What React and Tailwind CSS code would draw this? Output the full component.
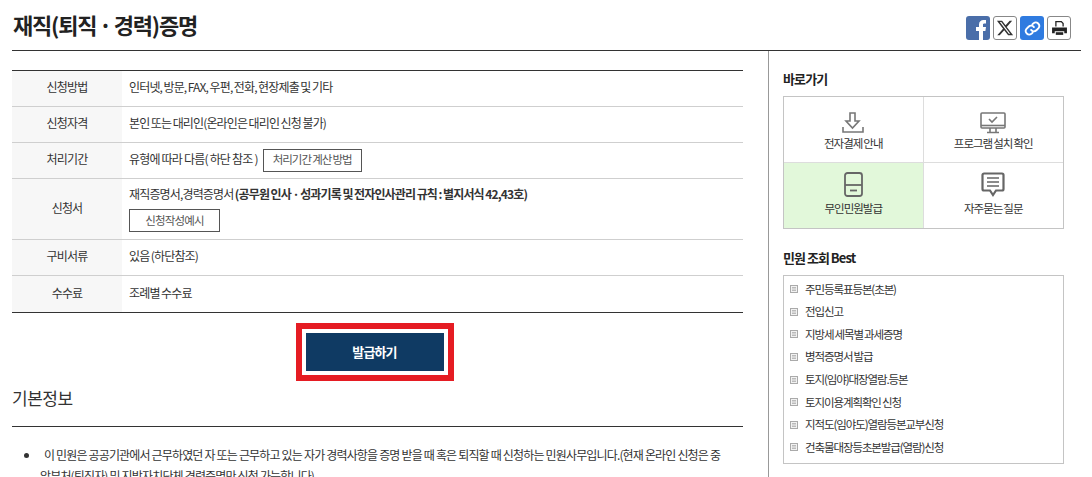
import React from "react";

const Row = ({ label, h, pb = "pb-[3px]", children }) => (
  <div className={`flex border-b border-[#cfcfcf] ${h}`}>
    <div className="w-[110px] shrink-0 bg-[#f7f7f7] flex items-center justify-center pb-[3px] text-[#333]">{label}</div>
    <div className={`flex-1 pl-[7px] flex flex-col justify-center ${pb}`}>{children}</div>
  </div>
);

const LinkBox = ({ bg, top, gap, icon, label }) => (
  <div className={`flex flex-col items-center h-full ${top} ${bg}`}>
    <div className="h-[24px] flex items-center justify-center">{icon}</div>
    <div className={`${gap} text-[11.5px] leading-[18px] tracking-[-1px] [word-spacing:-0.5px] text-[#333]`}>{label}</div>
  </div>
);

const bestList = [
  "주민등록표등본(초본)",
  "전입신고",
  "지방세 세목별 과세증명",
  "병적증명서 발급",
  "토지(임야)대장열람.등본",
  "토지이용계획확인 신청",
  "지적도(임야도)열람등본교부신청",
  "건축물대장등초본발급(열람)신청",
];

const App = () => {
  return (
    <div className="h-[477px] w-[1092px] overflow-hidden bg-white font-['Noto_Sans_CJK_KR','Noto_Sans',sans-serif] text-[12px] tracking-[-0.85px] [word-spacing:-0.4px] text-[#333]">
      <div className="ml-3 mr-[11px] h-[51px] border-b border-[#333] flex justify-between">
        <h1 className="pl-px pt-[6px] text-[22px] leading-[36px] font-bold tracking-[-1.2px] [word-spacing:-1px] text-[#222]">재직(퇴직 · 경력)증명</h1>
        <div className="flex gap-[3px] pt-4 pr-[10px]">
          <div className="w-6 h-6 rounded-[3px] bg-[#4a6ea9] overflow-hidden flex justify-center items-end">
            <svg width="24" height="24" viewBox="0 0 24 24"><path d="M13 24v-9h-3v-4h3V8.500C13 5.500 15 4 17.500 4H20v3.500h-1.800C17 7.500 17 8.300 17 9v2h3l-.6 4H17v9z" fill="#fff"/></svg>
          </div>
          <div className="w-6 h-6 rounded-[3px] border border-[#888] flex items-center justify-center">
            <svg width="18" height="18" viewBox="0 0 24 24" fill="#333"><path d="M18.240 2.250h3.310l-7.230 8.260 8.500 11.240H16.170l-5.210-6.820L4.990 21.750H1.680l7.730-8.840L1.250 2.250H8.080l4.710 6.230zM17.080 19.770h1.830L7.080 4.130H5.120z"/></svg>
          </div>
          <div className="w-6 h-6 rounded-[3px] bg-[#2f7be0] flex items-center justify-center">
            <svg width="17" height="17" viewBox="0 0 24 24" fill="none" stroke="#fff" strokeWidth="2.600" strokeLinecap="round"><path d="M10 14a5 5 0 0 0 7.500.5l3-3a5 5 0 0 0-7-7l-1.700 1.700"/><path d="M14 10a5 5 0 0 0-7.500-.5l-3 3a5 5 0 0 0 7 7l1.700-1.700"/></svg>
          </div>
          <div className="w-6 h-6 rounded-[3px] border border-[#888] flex items-center justify-center">
            <svg width="17" height="17" viewBox="0 0 16 16" fill="#222"><path d="M4 1h6l2 2v3h-1.200V3.600L9.500 2.200H5.200V6H4z"/><path d="M1 7h14v5.500h-2.500V10.500h-9v2H1z"/><path d="M4.500 11.500h7V14h-7z"/></svg>
          </div>
        </div>
      </div>

      <div className="flex pl-3">
        <div className="w-[731px] shrink-0 pt-[19px]">
          <div className="border-t border-b border-t-[#333] border-b-[#333]">
            <Row label="신청방법" h="h-9">
              <p>인터넷, 방문, FAX, 우편, 전화, 현장제출 및 기타</p>
            </Row>
            <Row label="신청자격" h="h-9">
              <p>본인 또는 대리인(온라인은 대리인 신청 불가)</p>
            </Row>
            <Row label="처리기간" h="h-9" pb="pb-px">
              <div className="flex items-center">
                <span className="mb-[2px] [word-spacing:0.2px]">유형에 따라 다름( 하단 참조 )</span>
                <span className="ml-[5px] w-[99px] h-[23px] border border-[#555] flex items-center justify-center text-[11.5px] tracking-[-1px] text-[#555]">처리기간 계산 방법</span>
              </div>
            </Row>
            <Row label="신청서" h="h-[61px]" pb="pb-px">
              <p>재직증명서,경력증명서 <b className="font-bold">(공무원 인사 · 성과기록 및 전자인사관리 규칙 : 별지서식 42,43호)</b></p>
              <span className="mt-[6px] w-[91px] h-[23px] border border-[#555] flex items-center justify-center text-[11.5px] text-[#555]">신청작성예시</span>
            </Row>
            <Row label="구비서류" h="h-9">
              <p>있음 (하단참조)</p>
            </Row>
            <div className="flex h-9">
              <div className="w-[110px] shrink-0 bg-[#f7f7f7] flex items-center justify-center pb-[3px]">수수료</div>
              <div className="flex-1 pl-[7px] pb-[3px] flex items-center">조례별 수수료</div>
            </div>
          </div>

          <div className="flex justify-center mt-[10px] pr-[6px]">
            <div className="w-[158px] h-[58px] border-[6px] border-[#e51c23] p-1">
              <div className="h-full bg-[#0f3a63] flex items-center justify-center text-white text-[13px] font-bold">발급하기</div>
            </div>
          </div>

          <h2 className="mt-[4px] h-[41px] text-[17px] leading-[26px] tracking-[-0.5px] font-normal text-[#333]">기본정보</h2>
          <div className="border-t border-[#333] pt-[17px]">
            <ul className="list-disc pl-[28px] leading-[21px] [word-spacing:0.1px]">
              <li className="whitespace-nowrap">&nbsp;&nbsp;이 민원은 공공기관에서 근무하였던 자 또는 근무하고 있는 자가 경력사항을 증명 받을 때 혹은 퇴직할 때 신청하는 민원사무입니다.(현재 온라인 신청은 중<br />앙부처(퇴직자) 및 지방자치단체 경력증명만 신청 가능합니다)</li>
            </ul>
          </div>
        </div>

        <div className="ml-[25px] border-l border-[#999] pl-[14px] pt-[19px] w-[297px] h-[426px]">
          <h3 className="text-[13px] leading-[18px] font-bold text-[#222]">바로가기</h3>
          <div className="mt-[8px] w-[281px] h-[133px] border border-[#c4c4c4] grid grid-cols-2 grid-rows-2">
            <div className="border-r border-b border-[#ddd]">
              <LinkBox bg="" top="pt-[14px]" gap="-mt-px" label="전자결제 안내" icon={
                <svg width="22" height="22" viewBox="0 0 22 22" fill="none" stroke="#777" strokeWidth="1.600"><path d="M8 1h5v8h4l-6.500 7L4 9h4z"/><path d="M1 15v5h20v-5"/></svg>
              } />
            </div>
            <div className="border-b border-[#ddd]">
              <LinkBox bg="" top="pt-[14px]" gap="-mt-px" label="프로그램 설치 확인" icon={
                <svg width="26" height="22" viewBox="0 0 26 22" fill="none" stroke="#777" strokeWidth="1.600"><rect x="1" y="1" width="24" height="15" rx="1"/><path d="M1 13.500h24" /><path d="M9 7l3 3 5-5"/><path d="M10 16v4M16 16v4M7 20.500h12"/></svg>
              } />
            </div>
            <div className="border-r border-[#ddd]">
              <LinkBox bg="bg-[#e2f8da]" top="pt-[10px]" gap="mt-[2px]" label="무인민원발급" icon={
                <svg width="19" height="25" viewBox="0 0 19 25" fill="none" stroke="#666" strokeWidth="1.800"><rect x="1" y="1" width="17" height="23" rx="2.500"/><path d="M1 13h17"/><path d="M6 18.500h7"/></svg>
              } />
            </div>
            <div>
              <LinkBox bg="" top="pt-[10px]" gap="mt-[2px]" label="자주묻는 질문" icon={
                <svg width="24" height="25" viewBox="0 0 24 25" fill="none" stroke="#666" strokeWidth="2.200"><path d="M3 1.500h18a1.500 1.500 0 0 1 1.500 1.500v14a1.500 1.500 0 0 1-1.500 1.500h-6l-3 4.500-3-4.500H3A1.500 1.500 0 0 1 1.500 17V3A1.500 1.500 0 0 1 3 1.500z"/><path d="M6 6h12M6 10h12M6 14h12" strokeWidth="1.600"/></svg>
              } />
            </div>
          </div>

          <h3 className="mt-[20px] text-[13px] leading-[18px] font-bold text-[#222]">민원 조회 Best</h3>
          <div className="mt-[8px] w-[281px] h-[189px] border border-[#c4c4c4] pt-[2px] pl-[6px]">
            {bestList.map((item) => (
              <div key={item} className="flex items-center h-[22.6px] text-[11.5px] tracking-[-1.1px]">
                <svg width="8" height="8" viewBox="0 0 8 8" className="mr-[7px] shrink-0"><rect x="0.500" y="0.500" width="7" height="7" fill="#f2f2f2" stroke="#aaa"/><path d="M2 2.500h4M2 4h4M2 5.500h4" stroke="#bbb"/></svg>
                <span>{item}</span>
              </div>
            ))}
          </div>
        </div>
      </div>
    </div>
  );
};

export default App;
